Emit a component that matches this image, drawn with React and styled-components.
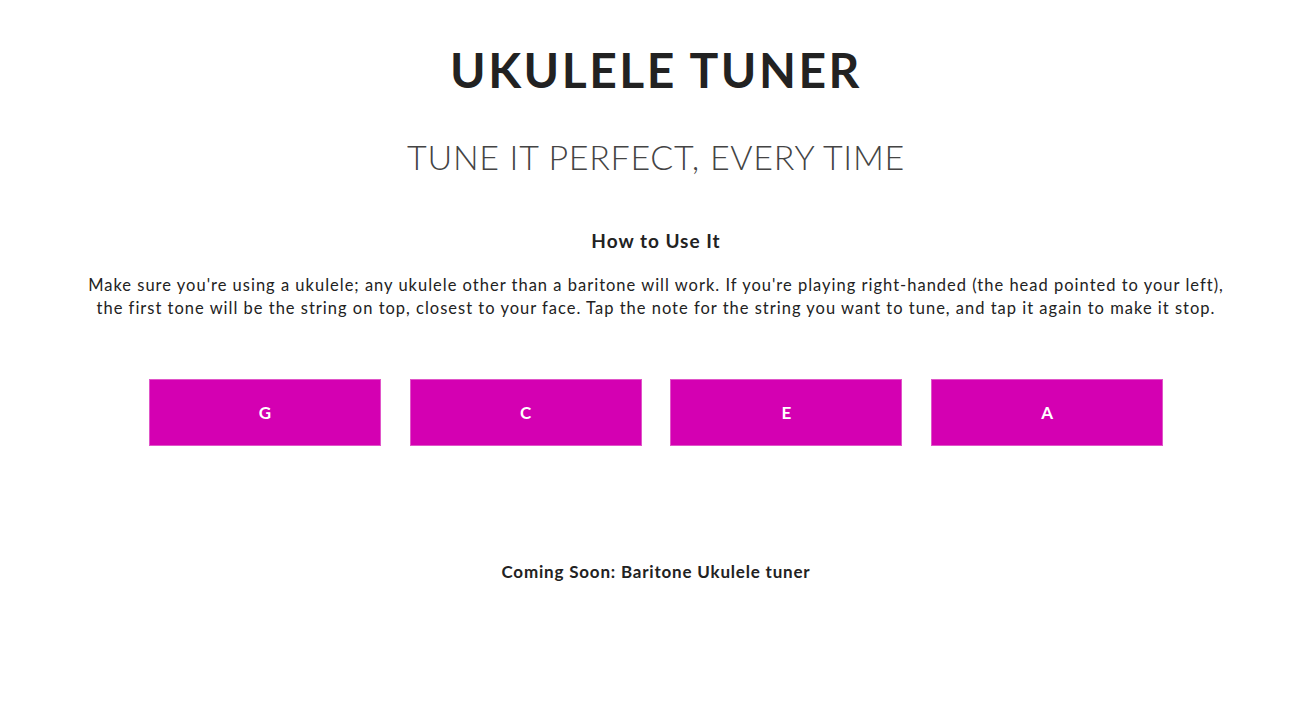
import React from "react";
import styled, { createGlobalStyle } from "styled-components";

const GlobalStyle = createGlobalStyle`
  body {
    margin: 0;
    background: #ffffff;
    font-family: "Lato", "Noto Sans", sans-serif;
  }
`;

const Page = styled.main`
  display: flex;
  flex-direction: column;
  align-items: center;
  padding-top: 38px;
  color: #222222;
`;

const Title = styled.h1`
  margin: 0;
  font-size: 48px;
  line-height: 64px;
  font-weight: 700;
  letter-spacing: 2.5px;
  color: #222222;
`;

const Subtitle = styled.h2`
  margin: 29px 0 0;
  font-size: 34px;
  line-height: 52px;
  font-weight: 300;
  letter-spacing: 0.7px;
  color: #444444;
`;

const Heading = styled.h3`
  margin: 46px 0 0;
  font-size: 19px;
  line-height: 24px;
  font-weight: 700;
  letter-spacing: 1px;
`;

const Instructions = styled.p`
  margin: 21px 0 0;
  max-width: 1150px;
  text-align: center;
  font-size: 16.5px;
  line-height: 23px;
  letter-spacing: 1px;
`;

const Notes = styled.div`
  display: grid;
  grid-template-columns: repeat(4, 232px);
  column-gap: 28.7px;
  margin-top: 59px;
`;

const NoteButton = styled.button`
  height: 67px;
  border: 1px solid #e055c8;
  background: #d400b2;
  color: #ffffff;
  font-family: inherit;
  font-size: 17px;
  font-weight: 700;
  cursor: pointer;
`;

const Footer = styled.p`
  margin: 114px 0 0;
  font-size: 17px;
  line-height: 24px;
  font-weight: 700;
  letter-spacing: 0.8px;
`;

const notes = ["G", "C", "E", "A"];

export default function App() {
  return (
    <>
      <GlobalStyle />
      <Page>
        <Title>UKULELE TUNER</Title>
        <Subtitle>TUNE IT PERFECT, EVERY TIME</Subtitle>
        <Heading>How to Use It</Heading>
        <Instructions>
          Make sure you're using a ukulele; any ukulele other than a baritone
          will work. If you're playing right-handed (the head pointed to your
          left), the first tone will be the string on top, closest to your
          face. Tap the note for the string you want to tune, and tap it again
          to make it stop.
        </Instructions>
        <Notes>
          {notes.map((note) => (
            <NoteButton key={note}>{note}</NoteButton>
          ))}
        </Notes>
        <Footer>Coming Soon: Baritone Ukulele tuner</Footer>
      </Page>
    </>
  );
}
